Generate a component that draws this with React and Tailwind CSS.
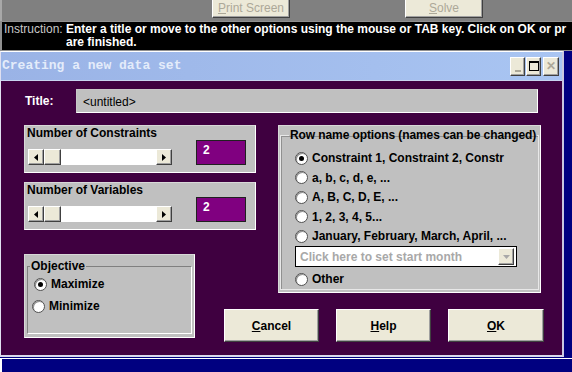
import React from "react";

const sans = "font-['Liberation_Sans',Arial,sans-serif]";

function Raised({ className = "", children }) {
  return (
    <div
      className={`flex items-center justify-center bg-[#ece9d8] border border-t-white border-l-white border-r-[#404040] border-b-[#404040] shadow-[inset_-1px_-1px_0_#a0a0a0] ${className}`}
    >
      {children}
    </div>
  );
}

function Arrow({ dir, color = "#000" }) {
  const pts = {
    left: "4,0 4,7 0,3.5",
    right: "0,0 0,7 4,3.5",
    down: "0,0 7,0 3.5,4",
  };
  const size = dir === "down" ? [7, 4] : [4, 7];
  return (
    <svg width={size[0]} height={size[1]} viewBox={`0 0 ${size[0]} ${size[1]}`}>
      <polygon points={pts[dir]} fill={color} />
    </svg>
  );
}

function ScrollBar() {
  return (
    <div className="flex h-[16px] w-[144px] bg-white">
      <Raised className="h-[16px] w-[16px]">
        <Arrow dir="left" />
      </Raised>
      <Raised className="h-[16px] w-[17px]" />
      <div className="flex-1" />
      <Raised className="h-[16px] w-[16px]">
        <Arrow dir="right" />
      </Raised>
    </div>
  );
}

function Radio({ checked }) {
  return (
    <span className="flex h-[13px] w-[13px] shrink-0 items-center justify-center rounded-full border border-[#505050] bg-white shadow-[inset_1px_1px_0_#909090]">
      {checked && <span className="h-[5px] w-[5px] rounded-full bg-black" />}
    </span>
  );
}

function Counter({ label, className = "" }) {
  return (
    <div
      className={`flex h-[48px] w-[232px] bg-[#c0c0c0] border border-[#d8d8d8] border-b-white border-r-white ${className}`}
    >
      <div className="flex flex-col pl-[2px]">
        <div className="h-[16px] text-[12px] font-bold leading-[14px] text-black">
          {label}
        </div>
        <div className="mt-[7px] pl-[1px]">
          <ScrollBar />
        </div>
      </div>
      <div className="ml-auto mr-[9px] mt-[14px] h-[25px] w-[50px] border border-[#202020] bg-[#800080] pl-[6px] text-[12px] font-bold leading-[18px] text-white">
        2
      </div>
    </div>
  );
}

const rowOptions = [
  { text: "Constraint 1, Constraint 2, Constr", checked: true },
  { text: "a, b, c, d, e, ..." },
  { text: "A, B, C, D, E, ..." },
  { text: "1, 2, 3, 4, 5..." },
  { text: "January, February, March, April, ..." },
];

export default function App() {
  return (
    <div
      className={`relative h-[372px] w-[572px] overflow-hidden bg-[#000080] ${sans}`}
    >
      {/* barre du haut */}
      <div className="flex h-[21px] border-l-2 border-[#a8a8a8] bg-[#808080]">
        <Raised className="ml-[210px] -mt-[3px] h-[21px] w-[78px]">
          <span className="text-[12px] text-[#aca899]">
            <u>P</u>rint Screen
          </span>
        </Raised>
        <Raised className="ml-[115px] -mt-[3px] h-[21px] w-[78px]">
          <span className="text-[12px] text-[#aca899]">
            <u>S</u>olve
          </span>
        </Raised>
      </div>

      {/* instruction */}
      <div className="flex h-[30px] overflow-hidden border-t border-b border-l-2 border-[#909090] bg-black pt-[1px] text-[12px] leading-[13px]">
        <div className="w-[64px] shrink-0 pl-[2px] text-[#c8c8c8]">Instruction:</div>
        <div className="w-[506px] shrink-0 overflow-hidden whitespace-nowrap font-bold text-white">
          Enter a title or move to the other options using the mouse or TAB key. Click on OK or pr
          <br />
          are finished.
        </div>
      </div>

      {/* fenetre */}
      <div className="w-[564px] border-t border-l border-r-2 border-b-2 border-t-white border-l-[#e0e0f0] border-r-[#c8c8e0] border-b-[#d8d8ec]">
        <div className="flex h-[29px] items-center bg-gradient-to-r from-[#9ab3e6] to-[#a9c5f2] border-b border-[#c8d4f0]">
          <div className="pl-[1px] font-['Liberation_Mono','Courier_New',monospace] text-[13px] font-bold text-[#e4ecfa]">
            Creating a new data set
          </div>
          <div className="ml-auto mr-[3px] flex gap-[1px]">
            <Raised className="h-[19px] w-[15px] items-end pb-[3px]">
              <div className="h-[2px] w-[6px] bg-[#aca899]" />
            </Raised>
            <Raised className="h-[19px] w-[15px]">
              <div className="h-[10px] w-[10px] border border-t-2 border-black" />
            </Raised>
            <Raised className="ml-[1px] h-[19px] w-[16px] text-[12px] font-bold text-[#aca899]">
              ✕
            </Raised>
          </div>
        </div>

        <div className="h-[274px] bg-[#3f0040] pl-[23px] pt-[8px]">
          {/* titre */}
          <div className="flex items-center">
            <div className="w-[52px] pl-[1px] text-[12px] font-bold text-white">Title:</div>
            <div className="h-[24px] w-[462px] border border-[#c8c8c8] border-b-white border-r-white bg-[#c0c0c0] pl-[6px] pt-[3px] text-[12px] text-black">
              &lt;untitled&gt;
            </div>
          </div>

          <div className="mt-[12px] flex">
            {/* colonne gauche */}
            <div className="flex w-[232px] flex-col">
              <Counter label="Number of Constraints" />
              <Counter label="Number of Variables" className="mt-[9px]" />
              <div className="mt-[24px] h-[84px] w-[171px] border border-[#d8d8d8] border-b-white border-r-white bg-[#c0c0c0] px-[2px] pt-[5px]">
                <fieldset className="h-[74px] border border-[#808080] border-r-white border-b-white pl-[6px]">
                  <legend className="-ml-[4px] px-[1px] text-[12px] font-bold leading-[13px] text-black">
                    Objective
                  </legend>
                  <div className="mt-[2px] flex items-center gap-[4px] text-[12px] font-bold text-black">
                    <Radio checked />
                    Maximize
                  </div>
                  <div className="-ml-[2px] mt-[4px] flex items-center gap-[4px] text-[12px] font-bold text-black">
                    <Radio />
                    Minimize
                  </div>
                </fieldset>
              </div>
            </div>

            {/* colonne droite */}
            <div className="ml-[22px] flex flex-col">
              <div className="h-[168px] w-[263px] border border-[#d8d8d8] border-b-white border-r-white bg-[#c0c0c0] px-[1px] pt-[3px]">
                <fieldset className="h-[161px] border border-[#e8e8e8] shadow-[inset_1px_1px_0_#909090] pl-[14px]">
                  <legend className="-ml-[6px] whitespace-nowrap px-[1px] text-[12px] font-bold leading-[13px] tracking-[-0.1px] text-black">
                    Row name options (names can be changed)
                  </legend>
                  <div className="mt-[9px] flex flex-col gap-[5.5px]">
                    {rowOptions.map((o, i) => (
                      <div
                        key={i}
                        className="flex h-[14px] items-center gap-[4px] whitespace-nowrap text-[12px] font-bold text-black"
                      >
                        <Radio checked={o.checked} />
                        {o.text}
                      </div>
                    ))}
                  </div>
                  <div className="mt-[3px] flex h-[21px] w-[222px] items-center border border-black bg-white pl-[4px] pr-[2px]">
                    <span className="text-[12px] font-bold text-[#a8a8a8]">
                      Click here to set start month
                    </span>
                    <Raised className="ml-auto h-[17px] w-[16px]">
                      <Arrow dir="down" color="#a8a8a8" />
                    </Raised>
                  </div>
                  <div className="mt-[3px] flex items-center gap-[4px] text-[12px] font-bold text-black">
                    <Radio />
                    Other
                  </div>
                </fieldset>
              </div>

              <div className="-ml-[54px] mt-[16px] flex gap-[17px]">
                <Raised className="h-[33px] w-[95px] text-[12px] font-bold text-black">
                  <span>
                    <u>C</u>ancel
                  </span>
                </Raised>
                <Raised className="h-[33px] w-[95px] text-[12px] font-bold text-black">
                  <span>
                    <u>H</u>elp
                  </span>
                </Raised>
                <Raised className="h-[33px] w-[96px] text-[12px] font-bold text-black">
                  <span>
                    <u>O</u>K
                  </span>
                </Raised>
              </div>
            </div>
          </div>
        </div>
      </div>

      {/* fenetre dessous */}
      <div className="mt-[1px] h-[20px] border-t border-l-2 border-white bg-[#000080]" />
    </div>
  );
}
